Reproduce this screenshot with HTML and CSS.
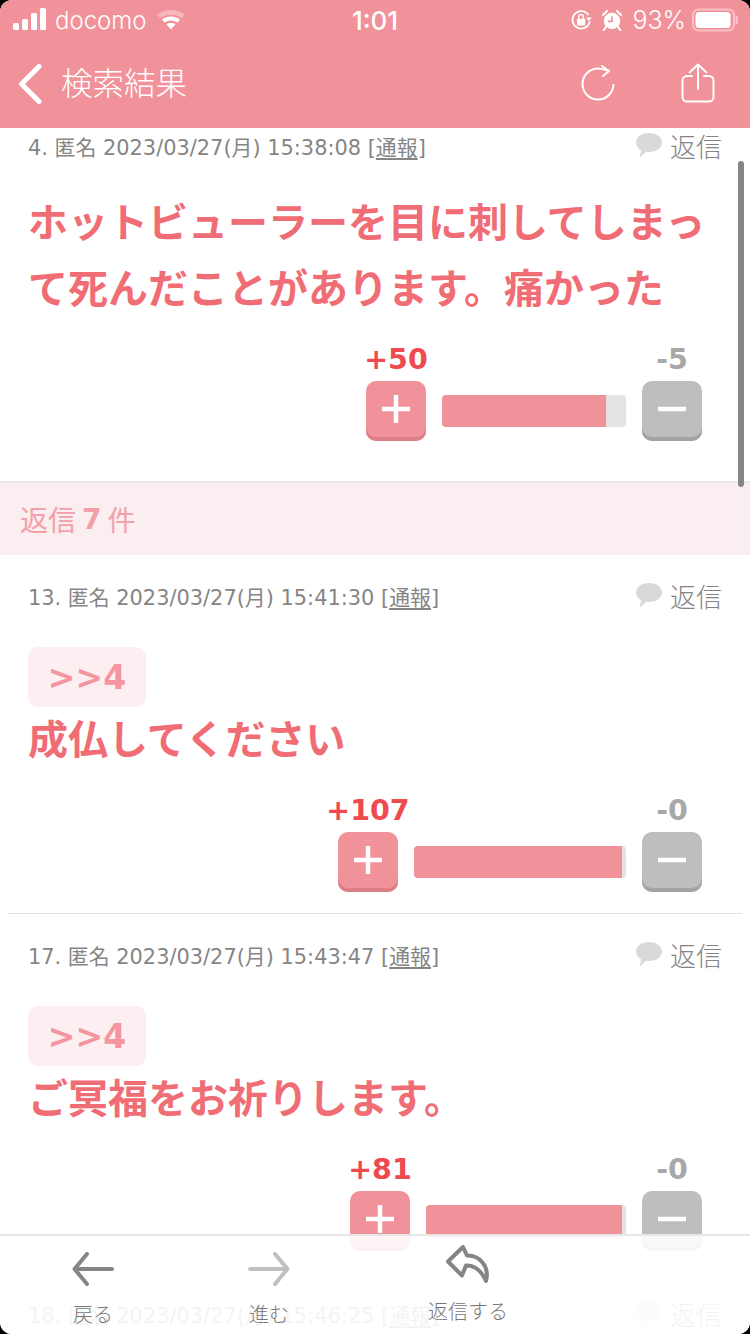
FILE: index.html
```html
<!DOCTYPE html>
<html lang="ja">
<head>
<meta charset="utf-8">
<title>検索結果</title>
<link rel="stylesheet" href="styles.css">
</head>
<body>
<div class="app">
  <header class="top">
    <div class="status">
      <div class="status-left">
        <svg class="signal" width="34" height="22" viewBox="0 0 34 22"><rect x="0" y="15" width="6" height="7" rx="1.5"/><rect x="9" y="11" width="6" height="11" rx="1.5"/><rect x="18" y="5" width="6" height="17" rx="1.5"/><rect x="27" y="0" width="6" height="22" rx="1.5"/></svg>
        <span class="carrier">docomo</span>
        <svg class="wifi" width="30" height="22" viewBox="0 0 30 22"><path d="M1 6.500C9 .5 21 .5 29 6.500L26 10C19.500 5.500 10.500 5.500 4 10Z" fill="#fff" opacity=".35"/><path d="M6 11.500C11 7.500 19 7.500 24 11.500L21.500 14.500C17.500 11.800 12.500 11.800 8.500 14.500Z" fill="#fff"/><path d="M10.500 16.200C13 14.500 17 14.500 19.500 16.200L15 21.500Z" fill="#fff"/></svg>
      </div>
      <span class="time">1:01</span>
      <div class="status-right">
        <svg width="22" height="22" viewBox="0 0 24 24" fill="none"><path d="M20.500 13.500A9.500 9.500 0 1 1 19 6.500" stroke="#fff" stroke-width="2"/><path d="M23 9.500L19 13 16.500 9Z" fill="#fff"/><rect x="6.500" y="10.500" width="9" height="7.500" rx="1" fill="#fff"/><path d="M8.500 10.500V8.500a2.500 2.500 0 0 1 5 0v2" stroke="#fff" stroke-width="1.600"/></svg>
        <svg width="20" height="22" viewBox="0 0 22 24" fill="none"><circle cx="11" cy="13" r="9" fill="#fff"/><path d="M11 8v5.500H6.500" stroke="#f19199" stroke-width="1.800"/><path d="M1 6.500 5.500 2M21 6.500 16.500 2M4 20l-2 3M18 20l2 3" stroke="#fff" stroke-width="2.400" stroke-linecap="round"/></svg>
        <span class="battery-pct">93%</span>
        <svg class="battery" width="46" height="24" viewBox="0 0 46 24"><rect x="1" y="1.500" width="41" height="21" rx="5.500" fill="none" stroke="#fff" stroke-opacity=".45" stroke-width="2"/><rect x="3.500" y="4" width="35" height="16" rx="3.500" fill="#fff"/><rect x="43.500" y="8" width="2.500" height="8" rx="1.200" fill="#fff" fill-opacity=".45"/></svg>
      </div>
    </div>
    <nav class="nav">
      <svg class="chev" width="24" height="40" viewBox="0 0 24 40" fill="none"><path d="M21 2.500 3.500 20 21 37.500" stroke="#fff" stroke-width="5" stroke-linecap="round" stroke-linejoin="round"/></svg>
      <h1 class="title">検索結果</h1>
      <svg class="reload" width="34" height="36" viewBox="0 0 34 36" fill="none"><path d="M32.500 19A15.500 15.500 0 1 1 17 3.500C20 3.500 24 4.500 28 6" stroke="#fff" stroke-width="2"/><path d="M21 1 28 6 22 11" stroke="#fff" stroke-width="2" stroke-linecap="round" stroke-linejoin="round"/></svg>
      <svg class="share" width="34" height="40" viewBox="0 0 34 40" fill="none"><path d="M17 26V2M8.500 9.500 17 1.500 25.500 9.500" stroke="#fff" stroke-width="2" stroke-linecap="round" stroke-linejoin="round"/><path d="M11 13H6a4.500 4.500 0 0 0-4.500 4.500v16.500A4.500 4.500 0 0 0 6 38.500h22a4.500 4.500 0 0 0 4.500-4.500V17.500A4.500 4.500 0 0 0 28 13h-5" stroke="#fff" stroke-width="2" stroke-linecap="round"/></svg>
    </nav>
  </header>

  <main class="feed">
    <article class="post post-first">
      <div class="meta">
        <span class="meta-text">4. 匿名 2023/03/27(月) 15:38:08 [<u>通報</u>]</span>
        <span class="reply"><svg width="26" height="26" viewBox="0 0 26 26"><path d="M13 0C20.500 0 26 4 26 9.500S20.500 19 13 19c-1 0-2 0-3-.2L3.500 25l1.700-7.800C2 15.500 0 12.800 0 9.500 0 4 5.500 0 13 0Z" fill="#d9d9d9"/></svg>返信</span>
      </div>
      <p class="body">ホットビューラーを目に刺してしまって死んだことがあります。痛かった</p>
      <div class="votes">
        <div class="vote-col"><span class="count plus">+50</span><button class="vbtn vbtn-plus"><svg width="30" height="30" viewBox="0 0 30 30"><path d="M15 1v28M1 15h28" stroke="#fff" stroke-width="4.500"/></svg></button></div>
        <div class="bar" style="width:184px"><div class="fill" style="width:164px"></div></div>
        <div class="vote-col"><span class="count minus">-5</span><button class="vbtn vbtn-minus"><svg width="30" height="30" viewBox="0 0 30 30"><path d="M1 15h28" stroke="#fff" stroke-width="4.500"/></svg></button></div>
      </div>
    </article>

    <div class="replies-band">返信 <b>7</b> 件</div>

    <article class="post">
      <div class="meta">
        <span class="meta-text">13. 匿名 2023/03/27(月) 15:41:30 [<u>通報</u>]</span>
        <span class="reply"><svg width="26" height="26" viewBox="0 0 26 26"><path d="M13 0C20.500 0 26 4 26 9.500S20.500 19 13 19c-1 0-2 0-3-.2L3.500 25l1.700-7.800C2 15.500 0 12.800 0 9.500 0 4 5.500 0 13 0Z" fill="#d9d9d9"/></svg>返信</span>
      </div>
      <div class="anchor">&gt;&gt;4</div>
      <p class="body">成仏してください</p>
      <div class="votes">
        <div class="vote-col"><span class="count plus">+107</span><button class="vbtn vbtn-plus"><svg width="30" height="30" viewBox="0 0 30 30"><path d="M15 1v28M1 15h28" stroke="#fff" stroke-width="4.500"/></svg></button></div>
        <div class="bar" style="width:212px"><div class="fill" style="width:208px"></div></div>
        <div class="vote-col"><span class="count minus">-0</span><button class="vbtn vbtn-minus"><svg width="30" height="30" viewBox="0 0 30 30"><path d="M1 15h28" stroke="#fff" stroke-width="4.500"/></svg></button></div>
      </div>
    </article>

    <article class="post">
      <div class="meta">
        <span class="meta-text">17. 匿名 2023/03/27(月) 15:43:47 [<u>通報</u>]</span>
        <span class="reply"><svg width="26" height="26" viewBox="0 0 26 26"><path d="M13 0C20.500 0 26 4 26 9.500S20.500 19 13 19c-1 0-2 0-3-.2L3.500 25l1.700-7.800C2 15.500 0 12.800 0 9.500 0 4 5.500 0 13 0Z" fill="#d9d9d9"/></svg>返信</span>
      </div>
      <div class="anchor">&gt;&gt;4</div>
      <p class="body">ご冥福をお祈りします。</p>
      <div class="votes">
        <div class="vote-col"><span class="count plus">+81</span><button class="vbtn vbtn-plus"><svg width="30" height="30" viewBox="0 0 30 30"><path d="M15 1v28M1 15h28" stroke="#fff" stroke-width="4.500"/></svg></button></div>
        <div class="bar" style="width:200px"><div class="fill" style="width:196px"></div></div>
        <div class="vote-col"><span class="count minus">-0</span><button class="vbtn vbtn-minus"><svg width="30" height="30" viewBox="0 0 30 30"><path d="M1 15h28" stroke="#fff" stroke-width="4.500"/></svg></button></div>
      </div>
    </article>

    <article class="post">
      <div class="meta">
        <span class="meta-text">18. 匿名 2023/03/27(月) 15:46:25 [<u>通報</u>]</span>
        <span class="reply"><svg width="26" height="26" viewBox="0 0 26 26"><path d="M13 0C20.500 0 26 4 26 9.500S20.500 19 13 19c-1 0-2 0-3-.2L3.500 25l1.700-7.800C2 15.500 0 12.800 0 9.500 0 4 5.500 0 13 0Z" fill="#d9d9d9"/></svg>返信</span>
      </div>
    </article>
  </main>

  <div class="scrollbar"></div>

  <footer class="tabbar">
    <div class="tab tab-back">
      <svg width="42" height="34" viewBox="0 0 42 34" fill="none"><path d="M40 17H3M15 2 2.500 17 15 32" stroke="#858585" stroke-width="4" stroke-linecap="round" stroke-linejoin="round"/></svg>
      <span>戻る</span>
    </div>
    <div class="tab tab-forward">
      <svg width="42" height="34" viewBox="0 0 42 34" fill="none"><path d="M2 17h37M27 2l12.500 15L27 32" stroke="#c0c0c0" stroke-width="4" stroke-linecap="round" stroke-linejoin="round"/></svg>
      <span>進む</span>
    </div>
    <div class="tab tab-reply">
      <svg width="44" height="38" viewBox="0 0 44 38" fill="none"><path d="M17 2 2 16.500 16 30.500 20 20.500C29 20 35 25 40 36 44 21 33 10 21 10.500Z" stroke="#858585" stroke-width="4" stroke-linejoin="round"/></svg>
      <span>返信する</span>
    </div>
  </footer>
</div>
</body>
</html>
```
FILE: styles.css
```css
* { box-sizing: border-box; }
html, body { margin: 0; padding: 0; background: #000; }
body { width: 750px; height: 1334px; overflow: hidden; font-family: "DejaVu Sans", "Noto Sans CJK JP", sans-serif; }
.app { position: relative; width: 750px; height: 1334px; background: #fff; border-radius: 12px; overflow: hidden; display: flex; flex-direction: column; }

.top { height: 128px; flex: none; background: #f19199; color: #fff; position: relative; z-index: 2; }
.status { height: 40px; padding: 0 12px 0 13px; display: flex; align-items: center; justify-content: space-between; font-family: Inter, "Liberation Sans", sans-serif; font-size: 24px; position: relative; }
.status-left, .status-right { display: flex; align-items: center; }
.signal { fill: #fff; margin-top: -2px; }
.carrier { margin-left: 8px; font-weight: 300; }
.wifi { margin-left: 9px; margin-top: -2px; }
.time { position: absolute; left: 0; right: 0; text-align: center; font-size: 26px; font-weight: 500; }
.status-right { gap: 9px; }
.battery-pct { font-size: 25px; font-weight: 300; margin-left: 1px; }
.battery { margin-left: -3px; }

.nav { height: 88px; display: flex; align-items: center; padding-left: 18px; }
.chev { flex: none; }
.title { margin: -4px 0 0 19px; font: 300 31.500px/1 "Noto Sans CJK JP", sans-serif; flex: 1; }
.reload { flex: none; margin-top: -2px; margin-right: 66px; }
.share { flex: none; margin-top: -2px; margin-right: 35px; }

.feed { flex: 1; min-height: 0; overflow: hidden; }
.post { padding: 28px 40px 21px 20px; margin: 0 8px; border-bottom: 1px solid #e3e3e3; }
.post-first { margin: -23px 0 0; padding: 28px 48px 40px 28px; border-bottom: 2px solid #e8e8e8; }
.meta { height: 30px; padding-bottom: 4px; display: flex; align-items: center; justify-content: space-between; margin-right: -20px; font-size: 20.900px; color: #858585; white-space: nowrap; }
.meta-text u { text-underline-offset: 3px; }
.reply { display: flex; align-items: center; font: 300 26px/30px "Noto Sans CJK JP", sans-serif; }
.reply svg { margin-right: 8px; }
.anchor { width: 118px; height: 60px; margin-top: 34px; border-radius: 10px; background: #fceef1; color: #f4959f; font-size: 33px; font-weight: 700; display: flex; align-items: center; justify-content: center; }
.body { margin: -3px -19px 0 0; font: 700 40px/66px "Noto Sans CJK JP", sans-serif; color: #f06d75; }
.post-first .body { margin-top: 24px; }
.votes { display: flex; justify-content: flex-end; align-items: flex-end; gap: 16px; margin-top: 26px; }
.vote-col { width: 60px; display: flex; flex-direction: column; align-items: center; }
.count { font-size: 28.500px; line-height: 30px; padding-bottom: 6px; font-weight: 700; white-space: nowrap; }
.plus { color: #ee4a50; }
.minus { color: #a8a8a8; }
.vbtn { width: 60px; height: 60px; padding: 0 0 4px; border: 0; border-radius: 10px; display: flex; align-items: center; justify-content: center; }
.vbtn-plus { background: #f19199; box-shadow: inset 0 -4px 0 #de7f88; }
.vbtn-minus { background: #bebebe; box-shadow: inset 0 -4px 0 #a3a3a3; }
.bar { height: 32px; margin-bottom: 14px; background: #e3e3e3; border-radius: 4px; overflow: hidden; }
.fill { height: 100%; background: #f19199; }

.replies-band { height: 72px; background: #faeef0; padding-left: 20px; display: flex; align-items: center; gap: 6px; color: #f4a0a8; font: 400 28px "Noto Sans CJK JP", sans-serif; }
.replies-band b { font: 700 28px "DejaVu Sans", sans-serif; }

.scrollbar { position: absolute; left: 738px; top: 161px; width: 6px; height: 326px; border-radius: 3px; background: #858585; z-index: 3; }

.tabbar { position: absolute; left: 0; right: 0; bottom: 0; height: 100px; background: rgba(255,255,255,.9); border-top: 2px solid #e6e6e6; z-index: 2; font: 300 20px "Noto Sans CJK JP", sans-serif; color: #777; }
.tab { position: absolute; display: flex; flex-direction: column; align-items: center; white-space: nowrap; }
.tab svg { flex: none; }
.tab-back { left: 72px; top: 16px; width: 42px; gap: 13px; }
.tab-forward { left: 248px; top: 16px; width: 42px; gap: 13px; }
.tab-reply { left: 428px; top: 9px; width: 80px; gap: 13px; }
```
